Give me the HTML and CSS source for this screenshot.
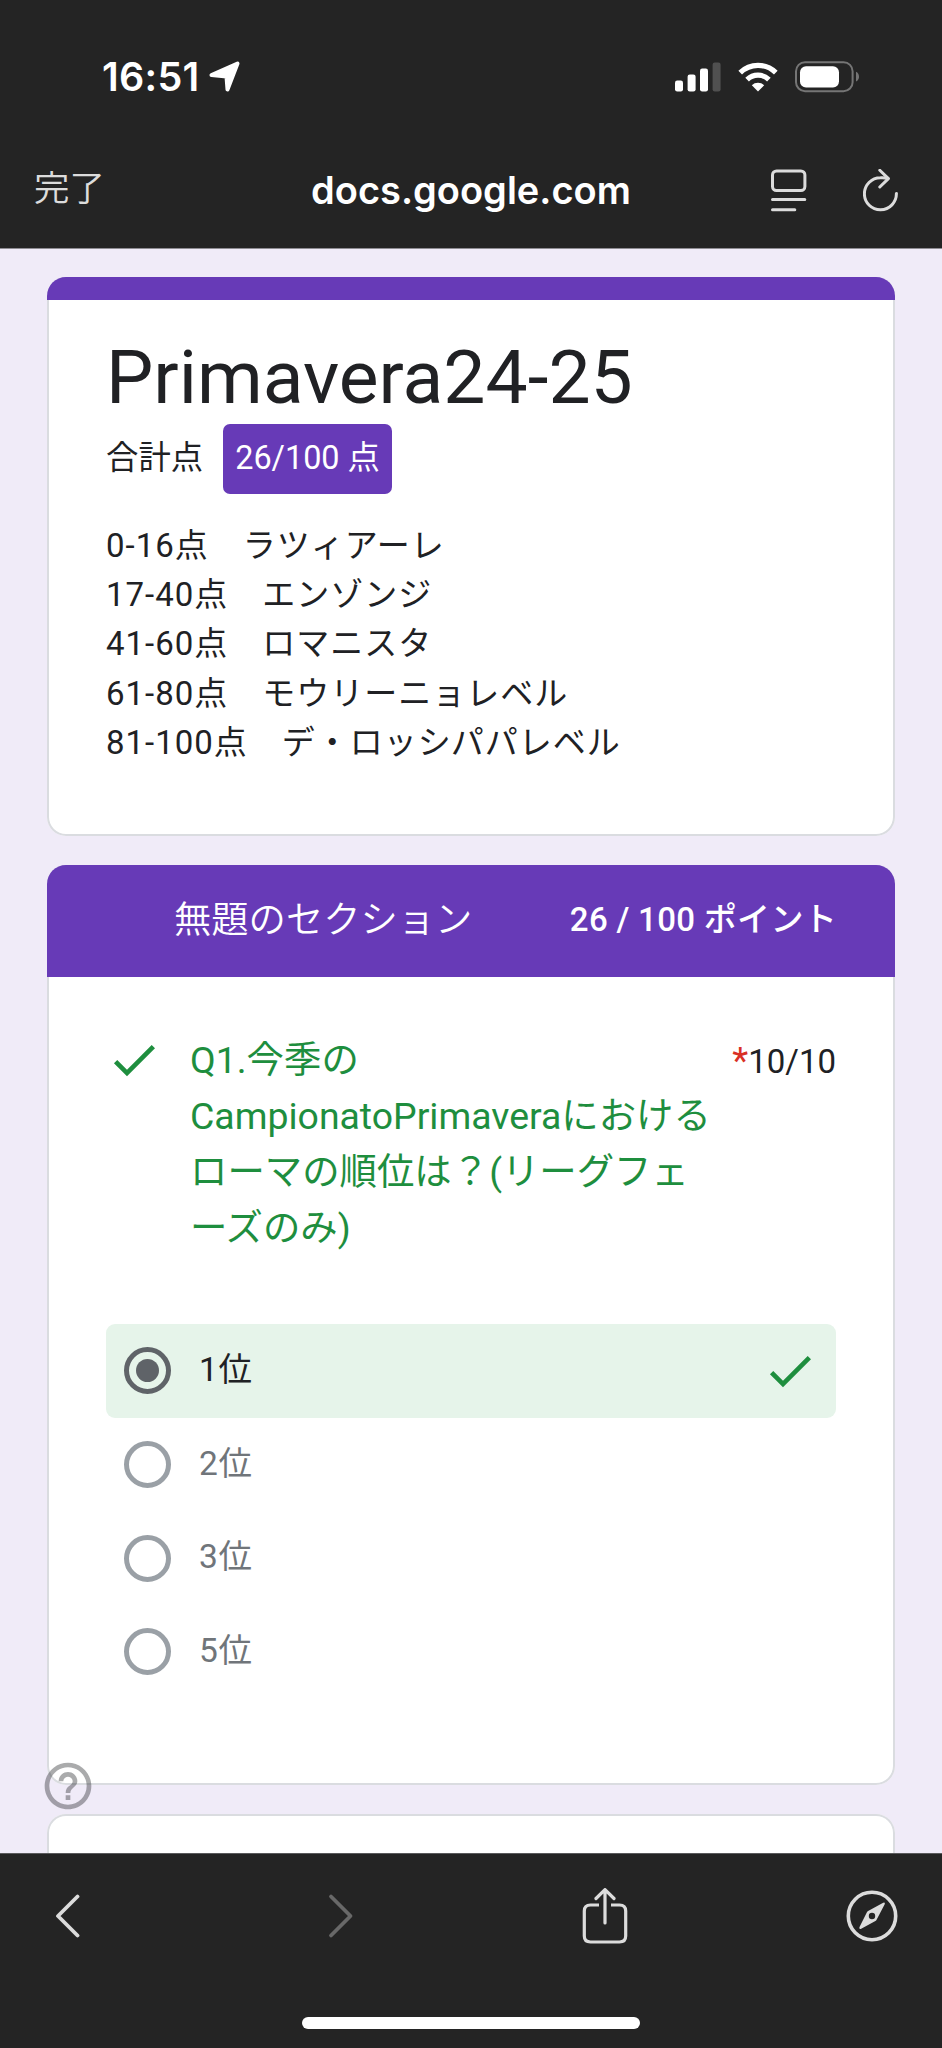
FILE: index.html
```html
<!DOCTYPE html>
<html lang="ja">
<head>
    <meta charset="UTF-8">
    <meta name="viewport" content="width=device-width, initial-scale=1.0">
    <title>Primavera24-25</title>
    <link rel="stylesheet" href="styles.css">
</head>
<body>
    <header class="top-bar">
        <div class="status-bar">
            <div class="status-left">
                <span class="time">16:51</span>
                <svg class="location" width="32" height="32" viewBox="0 0 32 32">
                    <path d="M2.500 14 28.500 2.500 18.500 28.500 17.500 15.500Z" fill="#fff" stroke="#fff" stroke-width="4" stroke-linejoin="round"/>
                </svg>
            </div>
            <div class="status-right">
                <svg width="46" height="30" viewBox="0 0 46 30" fill="#fff">
                    <rect x="0" y="18.5" width="8" height="11" rx="2.2"/>
                    <rect x="12.6" y="12.5" width="8" height="17" rx="2.2"/>
                    <rect x="25" y="6.5" width="8" height="23" rx="2.2"/>
                    <rect x="37.6" y="0.5" width="8" height="29" rx="2.2" fill="#505050"/>
                </svg>
                <svg class="wifi" width="40" height="30" viewBox="0 0 40 30" fill="none" stroke="#fff">
                    <path d="M2.2 10.6A25.5 25.5 0 0 1 37.8 10.6" stroke-width="5.2"/>
                    <path d="M9.1 17.6A15.6 15.6 0 0 1 30.9 17.6" stroke-width="5.2"/>
                    <path d="M20 29.5 13.8 23.2A9 9 0 0 1 26.2 23.2Z" fill="#fff" stroke="none"/>
                </svg>
                <svg class="battery" width="65" height="32" viewBox="0 0 65 32">
                    <rect x="1" y="1.2" width="56.6" height="29" rx="9" fill="none" stroke="#757575" stroke-width="2"/>
                    <rect x="5" y="5.2" width="39" height="21.2" rx="6" fill="#fff"/>
                    <path d="M61 10.8C65 12.5 65 18.9 61 20.6Z" fill="#757575"/>
                </svg>
            </div>
        </div>
        <div class="nav-bar">
            <span class="done">完了</span>
            <span class="host">docs.google.com</span>
            <div class="nav-icons">
                <svg width="36" height="44" viewBox="0 0 36 44" fill="none" stroke="#dcdcdc" stroke-width="3" stroke-linecap="round">
                    <rect x="1.5" y="2" width="32.4" height="19.6" rx="4"/>
                    <path d="M1.5 30.6H33.8M1.5 40.8H23.8"/>
                </svg>
                <svg width="36" height="44" viewBox="0 0 36 44" fill="none" stroke="#dcdcdc" stroke-width="3" stroke-linecap="round" stroke-linejoin="round">
                    <path d="M33.4 24.4A16 16 0 1 1 17.4 8.8Q21 8.6 24.8 9.2"/>
                    <path d="M16.8 1.2 25.4 9.6 16.8 18"/>
                </svg>
            </div>
        </div>
    </header>

    <main class="page">
        <section class="card intro">
            <div class="accent"></div>
            <div class="intro-body">
                <h1>Primavera24-25</h1>
                <div class="score">
                    <span>合計点</span>
                    <span class="score-badge">26/100 点</span>
                </div>
                <p class="description">0-16点　ラツィアーレ<br>17-40点　エンゾンジ<br>41-60点　ロマニスタ<br>61-80点　モウリーニョレベル<br>81-100点　デ・ロッシパパレベル</p>
            </div>
        </section>

        <section class="card section">
            <div class="section-header">
                <h2>無題のセクション</h2>
                <span class="section-points">26 / 100 ポイント</span>
            </div>
            <div class="question">
                <div class="question-head">
                    <svg class="check" viewBox="0 0 24 24"><path d="M9 16.17 4.83 12 3.41 13.41 9 19 21 7 19.59 5.59Z"/></svg>
                    <h3>Q1.今季の<br>CampionatoPrimaveraにおける<br>ローマの順位は？(リーグフェ<br>ーズのみ)</h3>
                    <span class="points"><span class="required">*</span>10/10</span>
                </div>
                <div class="options">
                    <div class="option correct">
                        <span class="radio checked"></span>
                        <span class="label">1位</span>
                        <svg class="check" viewBox="0 0 24 24"><path d="M9 16.17 4.83 12 3.41 13.41 9 19 21 7 19.59 5.59Z"/></svg>
                    </div>
                    <div class="option">
                        <span class="radio"></span>
                        <span class="label">2位</span>
                    </div>
                    <div class="option">
                        <span class="radio"></span>
                        <span class="label">3位</span>
                    </div>
                    <div class="option">
                        <span class="radio"></span>
                        <span class="label">5位</span>
                    </div>
                </div>
            </div>
        </section>

        <section class="card next"></section>

        <svg class="help" viewBox="0 0 24 24">
            <path d="M11 18h2v-2h-2v2zm1-16C6.48 2 2 6.48 2 12s4.48 10 10 10 10-4.48 10-10S17.52 2 12 2zm0 18c-4.41 0-8-3.59-8-8s3.59-8 8-8 8 3.59 8 8-3.59 8-8 8zm0-14c-2.21 0-4 1.79-4 4h2c0-1.100.9-2 2-2s2 .9 2 2c0 2-3 1.75-3 5h2c0-2.25 3-2.5 3-5 0-2.21-1.79-4-4-4z"/>
        </svg>
    </main>

    <footer class="bottom-bar">
        <div class="toolbar">
            <svg class="back" width="26" height="56" viewBox="0 0 26 56" fill="none" stroke="#dcdcdc" stroke-width="3.8" stroke-linecap="round" stroke-linejoin="round">
                <path d="M23.5 8.5 4 28 23.5 47.5"/>
            </svg>
            <svg class="forward" width="26" height="56" viewBox="0 0 26 56" fill="none" stroke="#686868" stroke-width="3.8" stroke-linecap="round" stroke-linejoin="round">
                <path d="M3 8.5 22.5 28 3 47.5"/>
            </svg>
            <svg class="share" width="46" height="56" viewBox="0 0 46 56" fill="none" stroke="#dcdcdc" stroke-width="3.2" stroke-linecap="round" stroke-linejoin="round">
                <path d="M17 17H8.5Q2.3 17 2.3 23V48Q2.3 54 8.5 54H37.5Q43.7 54 43.7 48V23Q43.7 17 37.5 17H29" stroke-linecap="butt"/>
                <path d="M23 35V2M14 10.5 23 1.6 32 10.5"/>
            </svg>
            <svg width="52" height="56" viewBox="0 0 52 56">
                <circle cx="26" cy="28" r="23.7" fill="none" stroke="#dcdcdc" stroke-width="3.6"/>
                <path fill-rule="evenodd" d="M37.2 14.8Q39.5 14 38.7 16.3L30.6 31.8Q30.2 32.6 29.4 33L15.2 40.8Q12.8 41.6 13.4 39.3L20.9 24.2Q21.3 23.4 22.1 23ZM26 24.8A3.2 3.2 0 1 0 26 31.2A3.2 3.2 0 1 0 26 24.8Z" fill="#dcdcdc"/>
            </svg>
        </div>
        <div class="home-indicator"></div>
    </footer>
</body>
</html>
```
FILE: styles.css
```css
* { box-sizing: border-box; }
body {
    margin: 0;
    width: 942px;
    height: 2048px;
    overflow: hidden;
    display: flex;
    flex-direction: column;
    background-color: #f0ebf8;
    color: #202124;
    font-family: Roboto, "Noto Sans CJK JP", sans-serif;
}
h1, h2, h3, p { margin: 0; font-weight: 400; }
svg { display: block; flex: none; }

/* Browser top bar */
.top-bar {
    height: 249px;
    background-color: #242424;
    border-bottom: 1px solid #8f8d93;
    color: #fff;
    font-family: Inter, "Noto Sans CJK JP", sans-serif;
}
.status-bar {
    display: flex;
    justify-content: space-between;
    height: 152px;
    padding: 61px 82px 0 102px;
}
.status-left, .status-right { display: flex; align-items: flex-start; }
.time { font-size: 39.5px; font-weight: 600; line-height: 32px; letter-spacing: 0.3px; }
.location { margin-left: 9px; }
.status-right svg { margin-top: 1px; }
.status-right .wifi { margin-left: 17px; }
.status-right .battery { margin: 0 0 0 17px; }
.nav-bar {
    display: grid;
    grid-template-columns: 1fr auto 1fr;
    align-items: center;
    height: 78px;
    padding: 0 43px 0 34px;
}
.done { font-size: 35.5px; font-weight: 350; line-height: 50px; padding-bottom: 5px; color: #dcdcdc; }
.host { font-size: 38px; font-weight: 600; line-height: 50px; padding-bottom: 2px; margin-left: 9px; }
.nav-icons { display: flex; justify-content: flex-end; gap: 56px; }

/* Form page */
.page {
    position: relative;
    flex: 1;
    overflow: hidden;
    padding: 28px 47px 0;
}
.card {
    background-color: #fff;
    box-shadow: inset 0 0 0 2px #dadce0;
    border-radius: 19px;
    margin-bottom: 29px;
    overflow: hidden;
}
.intro { height: 559px; }
.accent { height: 23px; background-color: #673ab7; }
.intro-body { padding: 30px 59px 0; }
h1 { font-size: 75px; line-height: 94px; }
.score { display: flex; gap: 20px; font-size: 32.4px; line-height: 68px; }
.score-badge {
    height: 70px;
    padding: 0 12px;
    border-radius: 7px;
    background-color: #673ab7;
    color: #fff;
}
.description { margin-top: 27px; font-size: 33px; line-height: 49.2px; letter-spacing: 1px; }

.section { height: 920px; }
.section-header {
    display: flex;
    justify-content: space-between;
    align-items: center;
    height: 112px;
    padding: 0 58px 2px 127px;
    background-color: #673ab7;
    color: #fff;
}
h2 { font-size: 37.3px; font-weight: 350; line-height: 56px; }
.section-points { font-size: 33px; font-weight: 500; line-height: 56px; letter-spacing: 0.3px; }
.question { padding: 55px 59px 0; }
.question-head { display: flex; height: 292px; }
h3 { margin-left: 28px; font-size: 37.4px; line-height: 56.1px; color: #1e8e3e; white-space: nowrap; }
.points { margin-left: auto; font-size: 33px; line-height: 57px; }
.required { color: #d93025; font-size: 37px; }
.check { width: 56px; height: 56px; fill: #1e8e3e; }
.option {
    display: flex;
    align-items: center;
    height: 93.7px;
    padding: 0 18px;
    border-radius: 9px;
    font-size: 33.5px;
    line-height: 92px;
    letter-spacing: 0.7px;
    color: #70757a;
}
.option .label { height: 94px; margin-left: 28px; }
.option .check { margin-left: auto; }
.correct { background-color: #e6f4ea; color: #202124; }
.radio {
    display: flex;
    align-items: center;
    justify-content: center;
    width: 47px;
    height: 47px;
    border: 5px solid #9aa0a6;
    border-radius: 50%;
}
.checked { border-color: #5f6368; }
.checked::after {
    content: "";
    width: 23px;
    height: 23px;
    border-radius: 50%;
    background-color: #5f6368;
}
.next { height: 120px; }

/* Floating help button */
.help {
    position: absolute;
    left: 40px;
    top: 1509px;
    width: 56px;
    height: 56px;
    fill: rgba(32, 33, 36, 0.38);
}

/* Browser bottom bar */
.bottom-bar {
    height: 195px;
    background-color: #242424;
    border-top: 1px solid #5a5a5c;
}
.toolbar {
    display: flex;
    padding: 34px 44px 0 54px;
}
.forward { margin-left: 248px; }
.share { margin-left: 228px; }
.toolbar svg:last-child { margin-left: auto; }
.home-indicator {
    width: 338px;
    height: 12px;
    margin: 73px auto 0;
    border-radius: 6px;
    background-color: #fff;
}
```
